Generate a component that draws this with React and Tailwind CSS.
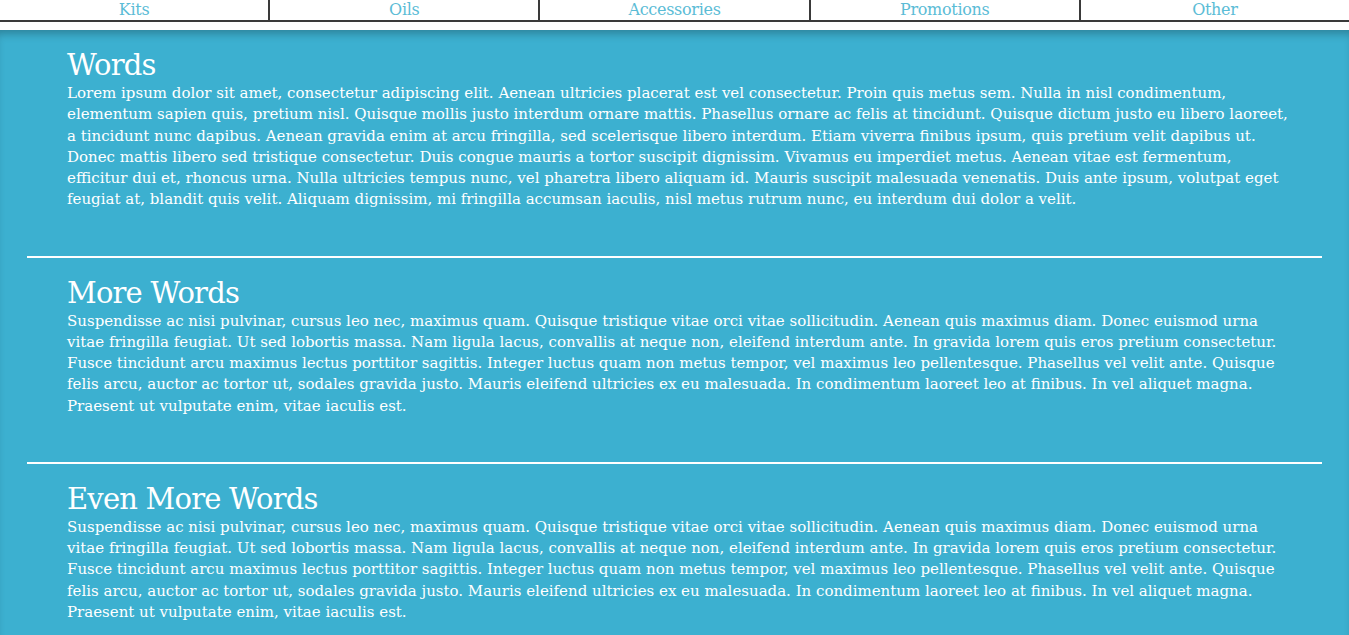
import React from 'react';

const navItems = ['Kits', 'Oils', 'Accessories', 'Promotions', 'Other'];

const sections = [
  {
    title: 'Words',
    lines: [
      'Lorem ipsum dolor sit amet, consectetur adipiscing elit. Aenean ultricies placerat est vel consectetur. Proin quis metus sem. Nulla in nisl condimentum,',
      'elementum sapien quis, pretium nisl. Quisque mollis justo interdum ornare mattis. Phasellus ornare ac felis at tincidunt. Quisque dictum justo eu libero laoreet,',
      'a tincidunt nunc dapibus. Aenean gravida enim at arcu fringilla, sed scelerisque libero interdum. Etiam viverra finibus ipsum, quis pretium velit dapibus ut.',
      'Donec mattis libero sed tristique consectetur. Duis congue mauris a tortor suscipit dignissim. Vivamus eu imperdiet metus. Aenean vitae est fermentum,',
      'efficitur dui et, rhoncus urna. Nulla ultricies tempus nunc, vel pharetra libero aliquam id. Mauris suscipit malesuada venenatis. Duis ante ipsum, volutpat eget',
      'feugiat at, blandit quis velit. Aliquam dignissim, mi fringilla accumsan iaculis, nisl metus rutrum nunc, eu interdum dui dolor a velit.',
    ],
  },
  {
    title: 'More Words',
    lines: [
      'Suspendisse ac nisi pulvinar, cursus leo nec, maximus quam. Quisque tristique vitae orci vitae sollicitudin. Aenean quis maximus diam. Donec euismod urna',
      'vitae fringilla feugiat. Ut sed lobortis massa. Nam ligula lacus, convallis at neque non, eleifend interdum ante. In gravida lorem quis eros pretium consectetur.',
      'Fusce tincidunt arcu maximus lectus porttitor sagittis. Integer luctus quam non metus tempor, vel maximus leo pellentesque. Phasellus vel velit ante. Quisque',
      'felis arcu, auctor ac tortor ut, sodales gravida justo. Mauris eleifend ultricies ex eu malesuada. In condimentum laoreet leo at finibus. In vel aliquet magna.',
      'Praesent ut vulputate enim, vitae iaculis est.',
    ],
  },
  {
    title: 'Even More Words',
    lines: [
      'Suspendisse ac nisi pulvinar, cursus leo nec, maximus quam. Quisque tristique vitae orci vitae sollicitudin. Aenean quis maximus diam. Donec euismod urna',
      'vitae fringilla feugiat. Ut sed lobortis massa. Nam ligula lacus, convallis at neque non, eleifend interdum ante. In gravida lorem quis eros pretium consectetur.',
      'Fusce tincidunt arcu maximus lectus porttitor sagittis. Integer luctus quam non metus tempor, vel maximus leo pellentesque. Phasellus vel velit ante. Quisque',
      'felis arcu, auctor ac tortor ut, sodales gravida justo. Mauris eleifend ultricies ex eu malesuada. In condimentum laoreet leo at finibus. In vel aliquet magna.',
      'Praesent ut vulputate enim, vitae iaculis est.',
    ],
  },
];

const Section = ({ title, lines, last }) => (
  <>
    <section className="px-[40px] pt-[17px] pb-[45px]">
      <h2 className="text-[29px] leading-[36px] tracking-[-0.8px]">{title}</h2>
      <p className="text-[15px] leading-[21.25px]">
        {lines.map((line, i) => (
          <span key={i} className="block whitespace-nowrap">{line}</span>
        ))}
      </p>
    </section>
    {!last && <div className="h-[2px] bg-white" />}
  </>
);

export default function App() {
  return (
    <div className="min-h-screen bg-white font-['DejaVu_Serif',serif]">
      <nav className="flex border-b-2 border-[#3a3a3a]">
        {navItems.map((item, i) => (
          <a
            key={item}
            href="#"
            className={`flex-1 text-center text-[16px] leading-[20px] tracking-[-0.3px] text-[#5bbcd6] ${i < navItems.length - 1 ? 'border-r-2 border-[#3a3a3a]' : ''}`}
          >
            {item}
          </a>
        ))}
      </nav>
      <main className="mt-[8px] bg-[#3cb0d0] px-[27px] text-white shadow-[inset_0_8px_8px_-4px_rgba(0,0,0,0.25)]">
        {sections.map((s, i) => (
          <Section key={s.title} title={s.title} lines={s.lines} last={i === sections.length - 1} />
        ))}
      </main>
    </div>
  );
}
